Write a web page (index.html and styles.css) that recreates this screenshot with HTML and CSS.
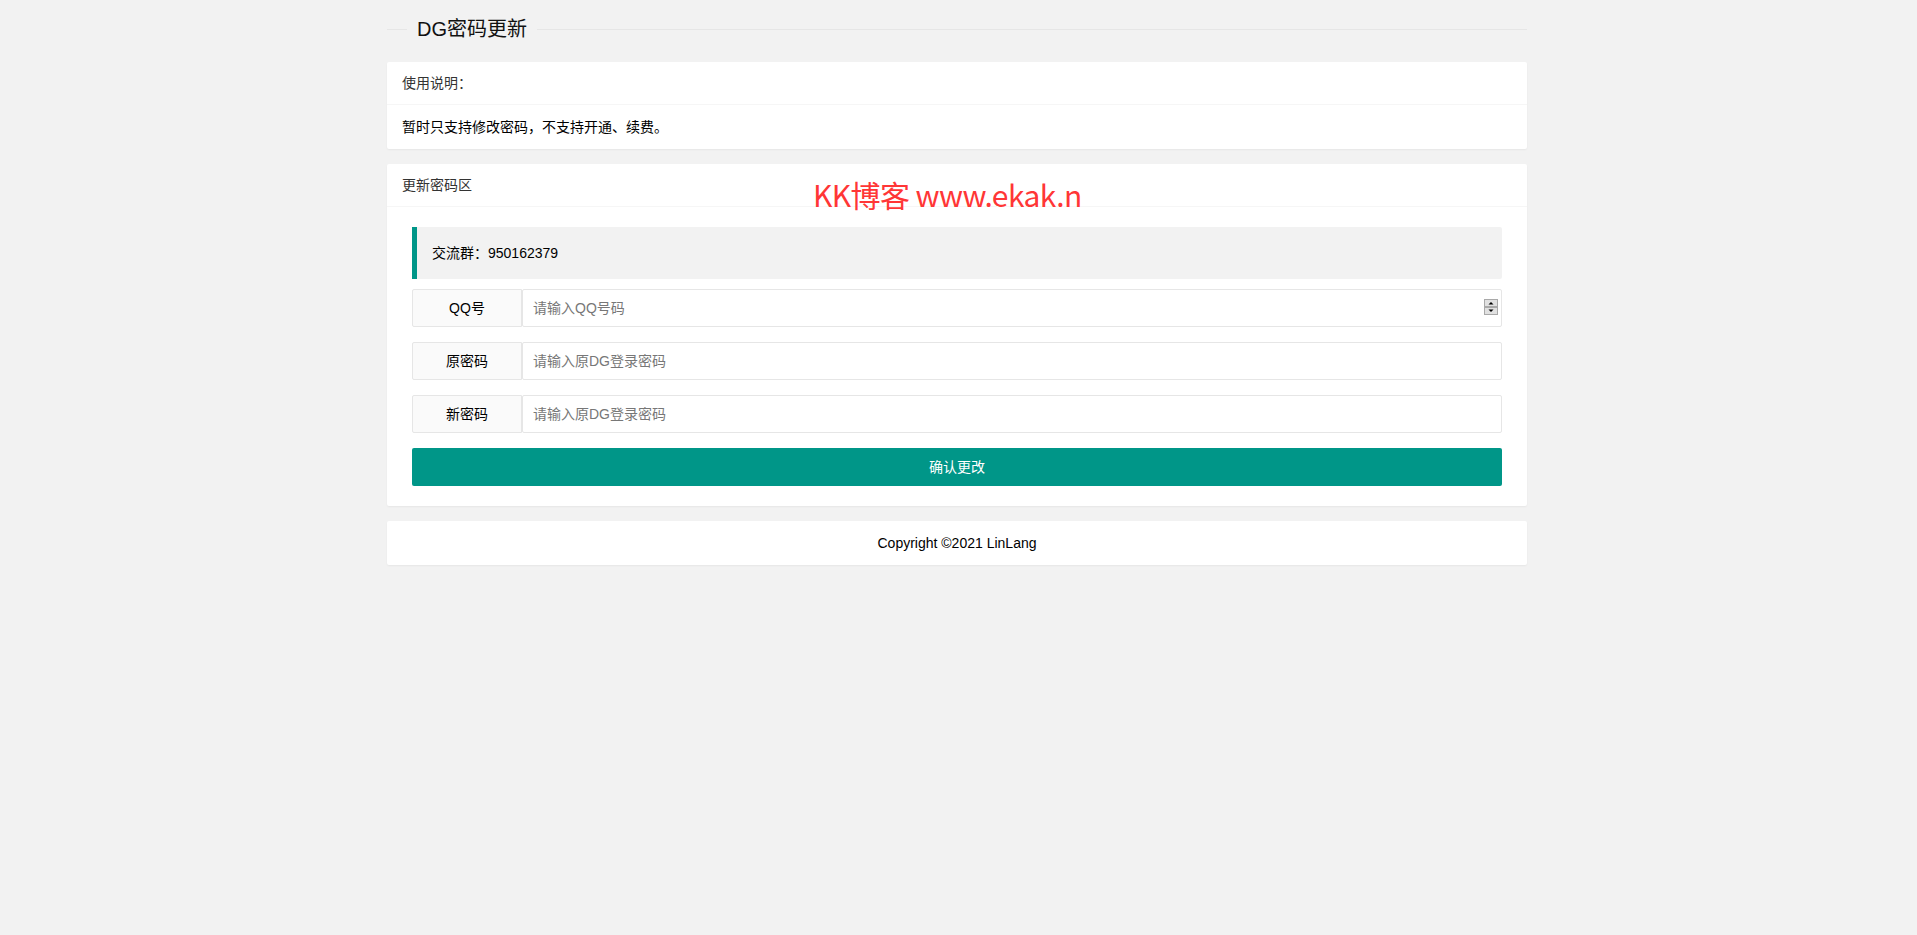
FILE: index.html
```html
<!DOCTYPE html>
<html lang="zh-CN">
<head>
<meta charset="utf-8">
<title>DG密码更新</title>
<link rel="stylesheet" href="styles.css">
</head>
<body>
<div class="wrap">
  <div class="page-title">
    <span class="line-short"></span>
    <span class="title-text">DG密码更新</span>
    <span class="line-long"></span>
  </div>

  <div class="card">
    <div class="card-header">使用说明：</div>
    <div class="card-body">暂时只支持修改密码，不支持开通、续费。</div>
  </div>

  <div class="card">
    <div class="card-header">更新密码区</div>
    <div class="card-body">
      <form class="form">
        <div class="quote">交流群：950162379</div>
        <div class="form-item">
          <label class="form-label">QQ号</label>
          <div class="input-block">
            <input class="input" type="text" inputmode="numeric" placeholder="请输入QQ号码">
            <span class="spinner">
              <svg width="15" height="16" viewBox="0 0 15 16">
                <rect x="0.5" y="0.5" width="13" height="7" fill="#e1e1e1" stroke="#a9a9a9"/>
                <rect x="0.5" y="8.5" width="13" height="7" fill="#e1e1e1" stroke="#a9a9a9"/>
                <polygon points="4.5,5.5 9.5,5.5 7,3" fill="#000"/>
                <polygon points="4.5,10.5 9.5,10.5 7,13" fill="#000"/>
              </svg>
            </span>
          </div>
        </div>
        <div class="form-item">
          <label class="form-label">原密码</label>
          <div class="input-block">
            <input class="input" type="password" placeholder="请输入原DG登录密码">
          </div>
        </div>
        <div class="form-item">
          <label class="form-label">新密码</label>
          <div class="input-block">
            <input class="input" type="password" placeholder="请输入原DG登录密码">
          </div>
        </div>
        <button class="btn" type="button">确认更改</button>
      </form>
    </div>
  </div>

  <div class="card">
    <div class="card-body footer">Copyright ©2021 LinLang</div>
  </div>
</div>

<div class="watermark">KK博客 www.ekak.n</div>
</body>
</html>
```

FILE: styles.css
```css
html {
  background: #f2f2f2;
}
body {
  margin: 0;
  padding: 0 3px 0 0;
  background: #f2f2f2;
  font-family: "Liberation Sans", "Noto Sans CJK SC", sans-serif;
  font-size: 14px;
  color: #111;
  min-height: 935px;
  position: relative;
}
.wrap {
  width: 1140px;
  margin: 0 auto;
}
.page-title {
  display: flex;
  align-items: center;
  height: 20px;
  padding-top: 19px;
  margin-bottom: 23px;
}
.line-short {
  width: 20px;
  height: 1px;
  background: #e6e6e6;
}
.line-long {
  flex: 1;
  height: 1px;
  background: #e6e6e6;
}
.title-text {
  padding: 0 10px;
  font-size: 20px;
  line-height: 20px;
  color: #111;
  white-space: nowrap;
}
.card {
  background: #fff;
  border-radius: 2px;
  box-shadow: 0 1px 2px 0 rgba(0, 0, 0, 0.05);
  margin-bottom: 15px;
}
.card-header {
  height: 42px;
  line-height: 42px;
  padding: 0 15px;
  border-bottom: 1px solid #f6f6f6;
  color: #333;
  font-size: 14px;
}
.card-body {
  padding: 10px 15px;
  line-height: 24px;
  color: #000;
}
.form {
  padding: 10px;
}
.quote {
  background: #f2f2f2;
  border-left: 5px solid #009688;
  border-radius: 0 2px 2px 0;
  padding: 15px;
  line-height: 22px;
  margin-bottom: 10px;
  color: #000;
}
.form-item {
  display: flex;
  margin-bottom: 15px;
}
.form-label {
  width: 110px;
  height: 38px;
  box-sizing: border-box;
  padding: 8px 15px;
  line-height: 20px;
  border: 1px solid #e6e6e6;
  border-radius: 2px 0 0 2px;
  background: #fafafa;
  text-align: center;
  color: #000;
}
.input-block {
  flex: 1;
  position: relative;
}
.input {
  display: block;
  width: 100%;
  height: 38px;
  box-sizing: border-box;
  border: 1px solid #e6e6e6;
  border-radius: 2px;
  padding: 0 10px;
  font-family: inherit;
  font-size: 14px;
  color: #000;
  background: #fff;
  outline: none;
}
.input::placeholder {
  color: #777;
}
.spinner {
  position: absolute;
  right: 3px;
  top: 10px;
  width: 15px;
  height: 16px;
  display: block;
}
.spinner svg {
  display: block;
}
.btn {
  display: block;
  width: 100%;
  height: 38px;
  border: 0;
  border-radius: 2px;
  background: #009688;
  color: #fff;
  font-family: inherit;
  font-size: 14px;
  line-height: 38px;
  padding: 0;
  text-align: center;
}
.footer {
  text-align: center;
  color: #000;
}
.watermark {
  position: absolute;
  left: 813px;
  top: 179px;
  font-family: "Noto Sans CJK SC", sans-serif;
  font-size: 30px;
  line-height: 30px;
  letter-spacing: -0.6px;
  color: #ff3636;
  white-space: nowrap;
}
```
